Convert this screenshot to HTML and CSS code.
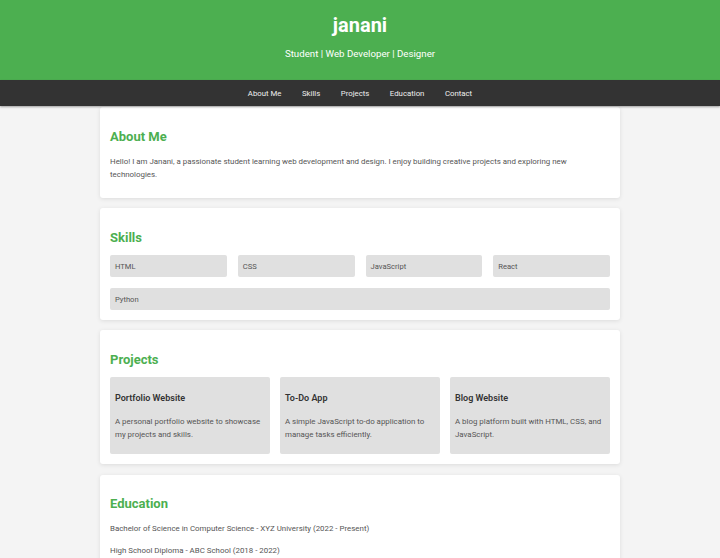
FILE: index.html
```html
<!DOCTYPE html>
<html lang="en">
<head>
<meta charset="utf-8">
<title>janani</title>
<link rel="stylesheet" href="styles.css">
</head>
<body>
<header class="hero">
  <h1 class="hero-title">janani</h1>
  <p class="hero-sub">Student | Web Developer | Designer</p>
</header>
<nav class="nav">
  <a href="#about">About Me</a>
  <a href="#skills">Skills</a>
  <a href="#projects">Projects</a>
  <a href="#education">Education</a>
  <a href="#contact">Contact</a>
</nav>
<main class="container">
  <section class="card" id="about">
    <h2 class="card-title">About Me</h2>
    <p class="text">Hello! I am Janani, a passionate student learning web development and design. I enjoy building creative projects and exploring new technologies.</p>
  </section>
  <section class="card" id="skills">
    <h2 class="card-title">Skills</h2>
    <div class="skills">
      <div class="skill">HTML</div>
      <div class="skill">CSS</div>
      <div class="skill">JavaScript</div>
      <div class="skill">React</div>
      <div class="skill skill-wide">Python</div>
    </div>
  </section>
  <section class="card" id="projects">
    <h2 class="card-title">Projects</h2>
    <div class="projects">
      <div class="project">
        <h3 class="project-title">Portfolio Website</h3>
        <p class="text">A personal portfolio website to showcase my projects and skills.</p>
      </div>
      <div class="project">
        <h3 class="project-title">To-Do App</h3>
        <p class="text">A simple JavaScript to-do application to manage tasks efficiently.</p>
      </div>
      <div class="project">
        <h3 class="project-title">Blog Website</h3>
        <p class="text">A blog platform built with HTML, CSS, and JavaScript.</p>
      </div>
    </div>
  </section>
  <section class="card" id="education">
    <h2 class="card-title">Education</h2>
    <p class="text edu">Bachelor of Science in Computer Science - XYZ University (2022 - Present)</p>
    <p class="text edu">High School Diploma - ABC School (2018 - 2022)</p>
  </section>
</main>
</body>
</html>
```
FILE: styles.css
```css
* { box-sizing: border-box; }
body {
  margin: 0;
  background: #f4f4f4;
  font-family: Roboto, "Liberation Sans", Arial, sans-serif;
  color: #333;
}
.hero {
  background: #4caf50;
  color: #fff;
  text-align: center;
  height: 80px;
  padding-top: 12px;
}
.hero-title {
  margin: 0;
  font-size: 20px;
  line-height: 26px;
  font-weight: 700;
}
.hero-sub {
  margin: 10px 0 0;
  font-size: 9.7px;
  line-height: 12px;
}
.nav {
  background: #333;
  height: 26px;
  display: flex;
  justify-content: center;
  align-items: center;
  gap: 20.5px;
  box-shadow: 0 1px 2px rgba(0,0,0,0.35);
  position: relative;
}
.nav a {
  color: #eee;
  text-decoration: none;
  font-size: 7.8px;
}
.container {
  width: 520px;
  margin: 1px auto 0;
  display: flex;
  flex-direction: column;
  gap: 10.2px;
}
.card {
  background: #fff;
  border-radius: 3px;
  padding: 10px;
  box-shadow: 0 1px 4px rgba(0,0,0,0.1);
}
.card-title {
  color: #4caf50;
  font-size: 13px;
  line-height: 15px;
  font-weight: 700;
  margin: 11.5px 0 10.5px;
}
.text {
  font-size: 7.9px;
  line-height: 13px;
  color: #555;
  margin: 0 0 7.5px;
}
#about .text { margin-top: 11px; }
.skills {
  display: grid;
  grid-template-columns: repeat(4, 1fr);
  gap: 11px;
}
.skill {
  background: #e0e0e0;
  border-radius: 2px;
  height: 22px;
  padding: 0 5px;
  display: flex;
  align-items: center;
  font-size: 7.6px;
  color: #555;
}
.skill-wide { grid-column: 1 / -1; }
.projects {
  display: grid;
  grid-template-columns: repeat(3, 1fr);
  gap: 10px;
}
.project {
  background: #e0e0e0;
  border-radius: 2px;
  height: 77px;
  padding: 15px 5px 0;
}
.project-title {
  font-size: 9px;
  line-height: 12px;
  font-weight: 600;
  margin: 0 0 11px;
  color: #333;
}
.project .text { margin: 0; }
.edu { margin: 0 0 9px; }
```
